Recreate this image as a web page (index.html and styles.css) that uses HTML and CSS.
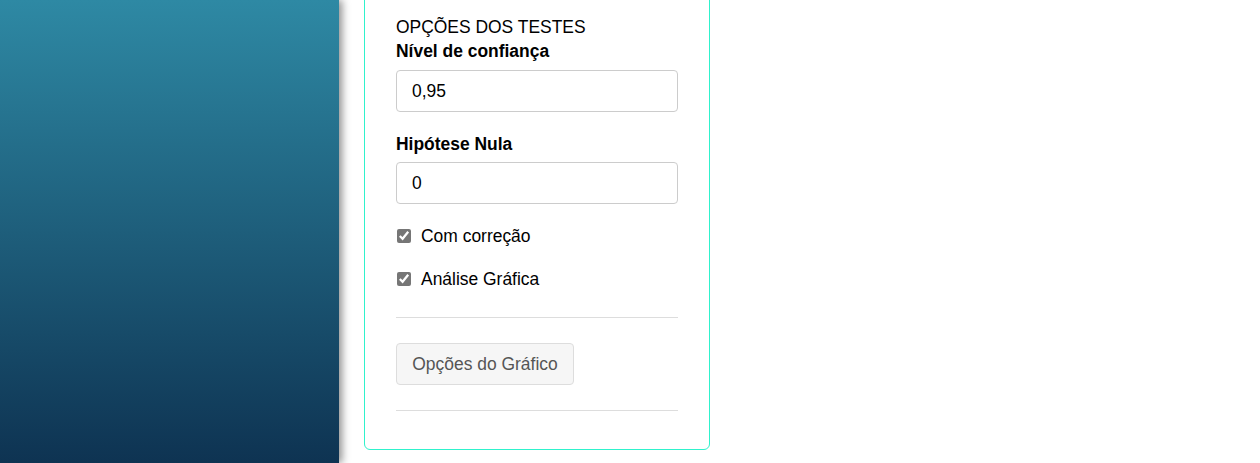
FILE: index.html
```html
<!DOCTYPE html>
<html lang="pt">
<head>
<meta charset="utf-8">
<title>Opções dos testes</title>
<link rel="stylesheet" href="styles.css">
</head>
<body>
<div class="layout">
  <aside class="sidebar"></aside>
  <main class="main">
    <section class="card">
      <div class="card-title">OPÇÕES DOS TESTES</div>
      <div class="field">
        <label class="field-label" for="conf">Nível de confiança</label>
        <input class="field-input" id="conf" type="text" value="0,95">
      </div>
      <div class="field">
        <label class="field-label" for="h0">Hipótese Nula</label>
        <input class="field-input" id="h0" type="text" value="0">
      </div>
      <label class="check"><input type="checkbox" checked><span>Com correção</span></label>
      <label class="check"><input type="checkbox" checked><span>Análise Gráfica</span></label>
      <hr class="divider">
      <button class="btn" type="button">Opções do Gráfico</button>
      <hr class="divider divider-last">
    </section>
  </main>
</div>
</body>
</html>
```
FILE: styles.css
```css
* { box-sizing: border-box; }
html, body { margin: 0; padding: 0; height: 100%; overflow: hidden; background: #fff; }
body {
  font-family: "Liberation Sans", Arial, sans-serif;
  font-size: 17.45px;
  color: #000;
}
.layout { display: flex; height: 463px; }
.sidebar {
  width: 339px;
  flex: 0 0 339px;
  background: linear-gradient(to bottom, #2e89a4 0%, #0e3352 100%);
  box-shadow: 3px 0 8px rgba(0,0,0,0.45);
  position: relative;
  z-index: 1;
}
.main { flex: 1; padding-left: 25px; }
.card {
  width: 346px;
  margin-top: -20px;
  padding: 36px 31px 38px 31px;
  border: 1px solid #2ff2cc;
  border-radius: 6px;
  background: #fff;
}
.card-title { line-height: 20px; margin-bottom: 4px; }
.field { margin-bottom: 22px; }
.field-label { display: block; font-weight: bold; line-height: 20px; margin-bottom: 9px; }
.field + .field .field-label { margin-bottom: 8px; }
.field-input {
  display: block;
  width: 100%;
  height: 42px;
  padding: 0 15px;
  border: 1px solid #ccc;
  border-radius: 4px;
  font: inherit;
  color: #000;
  background: #fff;
}
.check {
  display: flex;
  align-items: center;
  gap: 10px;
  height: 20px;
  margin: 0 0 23px;
  line-height: 20px;
}
.check input {
  margin: 0 0 0 1px;
  width: 14px;
  height: 14px;
  accent-color: #767676;
}
.divider {
  border: 0;
  border-top: 1px solid #ddd;
  margin: 0;
}
.check + .check { margin-bottom: 28px; }
.btn {
  display: block;
  margin-top: 25px;
  margin-bottom: 25px;
  width: 178px;
  height: 42px;
  border: 1px solid #ddd;
  border-radius: 4px;
  background: #f6f6f6;
  color: #555;
  font: inherit;
  padding: 0;
}
```
